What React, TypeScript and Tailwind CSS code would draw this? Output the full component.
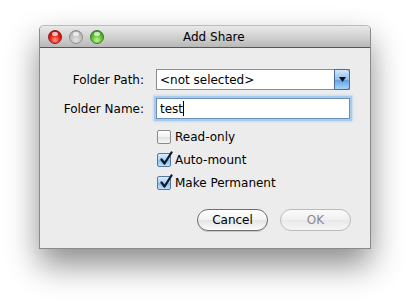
import React from "react";

function Light({ kind }: { kind: "red" | "gray" | "green" }) {
  const cls =
    kind === "red"
      ? "bg-[radial-gradient(circle_at_50%_75%,#ff9a8a_0%,#e8231a_45%,#a4100a_100%)] border-[#8a1a14]"
      : kind === "gray"
      ? "bg-[radial-gradient(circle_at_50%_75%,#e4e4e4_0%,#c2c2c2_50%,#9c9c9c_100%)] border-[#8e8e8e]"
      : "bg-[radial-gradient(circle_at_50%_75%,#c6f5a0_0%,#5fc234_45%,#2b8a12_100%)] border-[#3c7a22]";
  return (
    <div className={`relative w-[14px] h-[14px] rounded-full border ${cls}`}>
      <div className="absolute left-[3px] top-[1px] w-[6px] h-[4px] rounded-full bg-white/70" />
    </div>
  );
}

function Check({ checked, label }: { checked: boolean; label: string }) {
  return (
    <div className="h-[23px] flex items-center">
      <div
        className={`relative w-[14px] h-[14px] rounded-[2px] border ${
          checked
            ? "border-[#56789e] bg-[linear-gradient(#d6ebfc,#a9d2f3_50%,#86bdea_51%,#bfe0fb)]"
            : "border-[#8a8a8a] bg-[linear-gradient(#ffffff,#f0f0f0_50%,#e2e2e2_51%,#f6f6f6)]"
        }`}
      >
        {checked && (
          <svg className="absolute left-[1px] top-[-3px]" width="14" height="15" viewBox="0 0 14 15">
            <path d="M2.5 8.5 L5.5 12.5 L12.5 1.5" fill="none" stroke="#10182a" strokeWidth="2.3" strokeLinecap="round" strokeLinejoin="round" />
          </svg>
        )}
      </div>
      <span className="ml-[4px] text-[12px] text-black leading-none">{label}</span>
    </div>
  );
}

export default function App() {
  return (
    <div className="w-[410px] h-[303px] bg-white pt-[25px] pl-[39px] font-['DejaVu_Sans',sans-serif]">
      <div className="w-[332px] h-[224px] flex flex-col border border-[#8a8a8a] border-t-[#bdbdbd] rounded-t-[5px] shadow-[0_16px_32px_rgba(0,0,0,0.45)] bg-[#ececec]">
        <div className="h-[22px] shrink-0 flex items-center rounded-t-[4px] border-b border-[#555555] bg-[linear-gradient(#e9e9e9,#d2d2d2_50%,#b8b8b8)]">
          <div className="flex items-center gap-[7px] pl-[8px]">
            <Light kind="red" />
            <Light kind="gray" />
            <Light kind="green" />
          </div>
          <div className="ml-[79px] text-[12px] text-black leading-none">Add Share</div>
        </div>
        <div className="flex-1 flex flex-col pt-[21px]">
          <div className="flex items-center h-[21px]">
            <div className="w-[104px] text-right text-[12px] text-black">Folder Path:</div>
            <div className="ml-[12px] w-[194px] h-[21px] flex border border-[#8c8c8c] bg-white">
              <div className="flex-1 flex items-center pl-[3px] text-[12px] text-black">&lt;not selected&gt;</div>
              <div className="w-[16px] -my-px -mr-px flex items-center justify-center rounded-r-[3px] border border-[#4a6c9a] bg-[linear-gradient(#d4e8fb,#8ec0ee_50%,#5d9fe0_51%,#a9d5fb)]">
                <svg width="7" height="5" viewBox="0 0 7 5">
                  <path d="M0 0 L7 0 L3.5 5 Z" fill="#111" />
                </svg>
              </div>
            </div>
          </div>
          <div className="flex items-center h-[21px] mt-[8px]">
            <div className="w-[104px] text-right text-[12px] text-black">Folder Name:</div>
            <div className="ml-[12px] w-[194px] h-[21px] flex items-center pl-[3px] border border-[#6c8fb8] bg-white shadow-[0_0_0_2px_#a8cbed,0_0_2px_3px_#c4dcf2]">
              <span className="text-[12px] text-black">test</span>
              <span className="w-px h-[15px] bg-black" />
            </div>
          </div>
          <div className="flex flex-col pl-[117px] mt-[6px]">
            <Check checked={false} label="Read-only" />
            <Check checked label="Auto-mount" />
            <Check checked label="Make Permanent" />
          </div>
          <div className="flex justify-end gap-[12px] pr-[19px] mt-[15px]">
            <button className="w-[71px] h-[22px] rounded-full border border-[#6e6e6e] bg-[linear-gradient(#ffffff,#f2f2f2_50%,#e4e4e4_51%,#fbfbfb)] text-[12px] text-black shadow-[0_1px_0_rgba(0,0,0,0.15)]">
              Cancel
            </button>
            <button className="w-[71px] h-[22px] rounded-full border border-[#bcbcbc] bg-[linear-gradient(#fafafa,#f0f0f0_50%,#e8e8e8_51%,#f6f6f6)] text-[12px] text-[#8a8a8a]">
              OK
            </button>
          </div>
        </div>
      </div>
    </div>
  );
}
